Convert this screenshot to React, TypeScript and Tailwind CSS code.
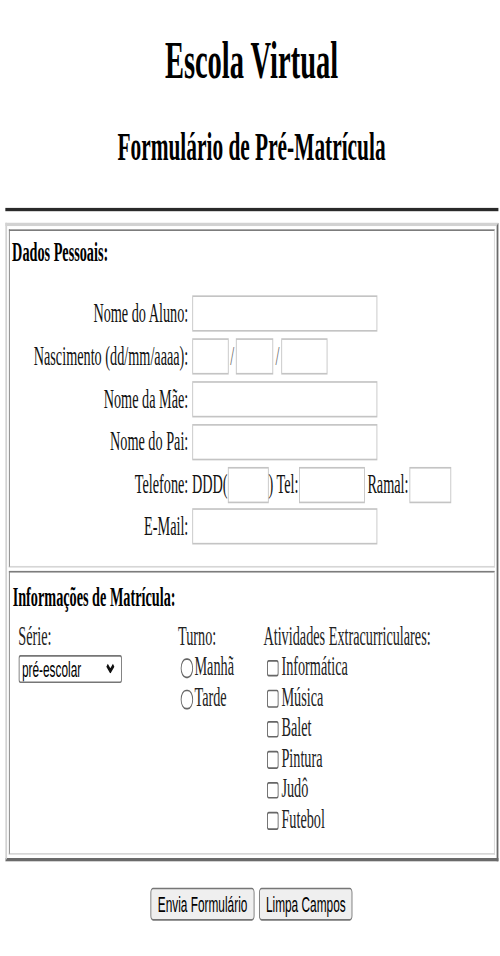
import React from "react";

// The picture is a small form page stretched tall: lay it out at its
// original size and stretch the whole sheet the same way.
const serif = "font-['Liberation_Serif','Times_New_Roman',serif]";
const sans = "font-['Liberation_Sans',Arial,sans-serif]";
const textInput =
  "h-[22px] border border-[#c4c4c4] bg-white px-[2px] text-[13.33px] outline-none";

const ACTIVITIES = ["Informática", "Música", "Balet", "Pintura", "Judô", "Futebol"];

function Row({ label, children }: { label: string; children: React.ReactNode }) {
  return (
    <>
      <label className="text-right leading-[18px] text-[#111]">{label}</label>
      <div className="flex items-center">{children}</div>
    </>
  );
}

export default function App() {
  return (
    <div className="w-[500px] h-[956px] overflow-hidden bg-white">
      <div
        className={`w-[562px] h-[580px] origin-top-left scale-x-[0.89] scale-y-[1.65] pl-[5.6px] pr-[2.4px] pt-[18px] text-[16px] text-black ${serif}`}
      >
        <h1 className="text-center text-[32px] leading-[36px] font-bold">Escola Virtual</h1>
        <h2 className="mt-[21px] text-center text-[24px] leading-[28px] font-bold">
          Formulário de Pré-Matrícula
        </h2>
        <div className="mt-[23px] h-[1.5px] bg-[#2a2a2a]" />

        {/* outer table */}
        <form className="mt-[7.3px] flex flex-col gap-[2px] border-2 border-t-[#d2d2d2] border-l-[#d2d2d2] border-b-[#6a6a6a] border-r-[#6a6a6a] p-[2px]">
          {/* Dados Pessoais */}
          <div className="h-[205.5px] border border-t-[#7c7c7c] border-l-[#7c7c7c] border-b-[#d6d6d6] border-r-[#d6d6d6] px-[3px] pt-[4px]">
            <div className="font-bold leading-[18px]">Dados Pessoais:</div>
            <div className="mt-[17.6px] grid grid-cols-[198px_auto] auto-rows-[22px] gap-x-[4px] gap-y-[3.8px] items-center">
              <Row label="Nome do Aluno:">
                <input className={`${textInput} ${sans} w-[208px]`} />
              </Row>
              <Row label="Nascimento (dd/mm/aaaa):">
                <input className={`${textInput} ${sans} w-[41px]`} />
                <span className="mx-[2.2px] leading-[18px] text-[#666]">/</span>
                <input className={`${textInput} ${sans} w-[42px]`} />
                <span className="mx-[2.2px] leading-[18px] text-[#666]">/</span>
                <input className={`${textInput} ${sans} w-[52px]`} />
              </Row>
              <Row label="Nome da Mãe:">
                <input className={`${textInput} ${sans} w-[208px]`} />
              </Row>
              <Row label="Nome do Pai:">
                <input className={`${textInput} ${sans} w-[208px]`} />
              </Row>
              <Row label="Telefone:">
                <span className="leading-[18px] text-[#111]">DDD(</span>
                <input className={`${textInput} ${sans} w-[46px]`} />
                <span className="leading-[18px] text-[#111] whitespace-pre">) Tel:</span>
                <input className={`${textInput} ${sans} ml-[0.5px] w-[74px]`} />
                <span className="ml-[3px] leading-[18px] text-[#111]">Ramal:</span>
                <input className={`${textInput} ${sans} ml-[1px] w-[47px]`} />
              </Row>
              <Row label="E-Mail:">
                <input className={`${textInput} ${sans} w-[208px]`} />
              </Row>
            </div>
          </div>

          {/* Informações de Matrícula */}
          <div className="h-[172px] border border-t-[#7c7c7c] border-l-[#7c7c7c] border-b-[#d6d6d6] border-r-[#d6d6d6] px-[3px] pt-[6px]">
            <div className="pl-[0.6px] font-bold leading-[18px]">Informações de Matrícula:</div>
            <div className="mt-[5.5px] flex pl-[7px] leading-[18.5px] text-[#222]">
              <div className="w-[179.4px]">
                <div>Série:</div>
                <div className="relative mt-[0.5px] w-[116px]">
                  <select
                    defaultValue="pre"
                    className={`h-[17.5px] w-full appearance-none rounded-[2px] border border-[#767676] bg-white pl-[3px] text-[13.33px] leading-[15px] text-black outline-none ${sans}`}
                  >
                    <option value="pre">pré-escolar</option>
                    <option value="1">1ª série</option>
                    <option value="2">2ª série</option>
                  </select>
                  <svg
                    viewBox="0 0 10 6"
                    className="pointer-events-none absolute right-[7.5px] top-[5.8px] h-[6px] w-[10px]"
                  >
                    <path d="M1.3 1.2 L5 4.7 L8.7 1.2" fill="none" stroke="#111" strokeWidth="2.4" />
                  </svg>
                </div>
              </div>

              <div className="w-[96px]">
                <div>Turno:</div>
                {["Manhã", "Tarde"].map((t) => (
                  <label key={t} className="flex items-center">
                    <input type="radio" name="turno" className="sr-only" />
                    <span className="ml-[3.5px] mr-[1px] mt-[1px] block h-[12px] w-[14px] shrink-0 rounded-full border border-[#666] bg-white" />
                    {t}
                  </label>
                ))}
              </div>

              <div>
                <div>Atividades Extracurriculares:</div>
                {ACTIVITIES.map((a) => (
                  <label key={a} className="flex items-center">
                    <input type="checkbox" className="sr-only" />
                    <span className="ml-[3.7px] mr-[3px] mt-[1px] block h-[10.5px] w-[13.5px] shrink-0 rounded-[2px] border border-[#666] bg-white" />
                    {a}
                  </label>
                ))}
              </div>
            </div>
          </div>
        </form>

        <div className={`mt-[16px] flex justify-center gap-[5px] ${sans}`}>
          <button
            type="button"
            className="h-[20px] w-[117px] rounded-[3px] border border-[#767676] bg-[#efefef] text-[13.33px] leading-[15px] text-black"
          >
            Envia Formulário
          </button>
          <button
            type="button"
            className="h-[20px] w-[105px] rounded-[3px] border border-[#767676] bg-[#efefef] text-[13.33px] leading-[15px] text-black"
          >
            Limpa Campos
          </button>
        </div>
      </div>
    </div>
  );
}
